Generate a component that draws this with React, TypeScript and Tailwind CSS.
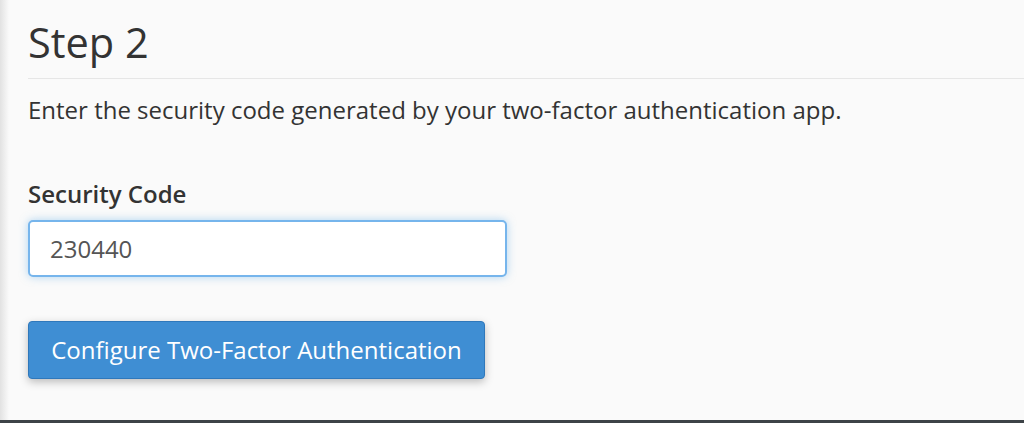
export default function App() {
  return (
    <div className="relative h-[423px] w-[1024px] overflow-hidden bg-[#fafafa] font-['Open_Sans',sans-serif]">
      {/* left edge shade */}
      <div className="absolute left-0 top-0 h-full w-[9px] bg-gradient-to-r from-[#e2e2e2] to-[#fafafa]" />
      <div className="pl-[28px] pt-[14px]">
        <h1 className="text-[41.5px] leading-[56px] text-[#333333]">Step 2</h1>
        <div className="mt-[8px] border-t border-[#e6e6e6]" />
        <p className="mt-[15px] text-[24px] leading-[32px] text-[#333333]">
          Enter the security code generated by your two-factor authentication app.
        </p>
        <label className="mt-[52px] block text-[24px] font-semibold leading-[32px] text-[#333333]">
          Security Code
        </label>
        <input
          defaultValue="230440"
          className="mt-[10px] block h-[57px] w-[479px] rounded-[5px] border-2 border-[#76b5ec] bg-white px-[20px] text-[24px] text-[#555555] shadow-[0_0_8px_rgba(102,175,233,0.5)] outline-none"
        />
        <button className="mt-[44px] h-[58px] w-[457px] rounded-[4px] border border-[#2f78bb] bg-[#3f8ed3] text-[24px] text-white shadow-[0_3px_8px_rgba(0,0,0,0.25)]">
          Configure Two-Factor Authentication
        </button>
      </div>
      <div className="absolute bottom-0 left-0 h-[3px] w-full bg-[#3d4347]" />
    </div>
  );
}
